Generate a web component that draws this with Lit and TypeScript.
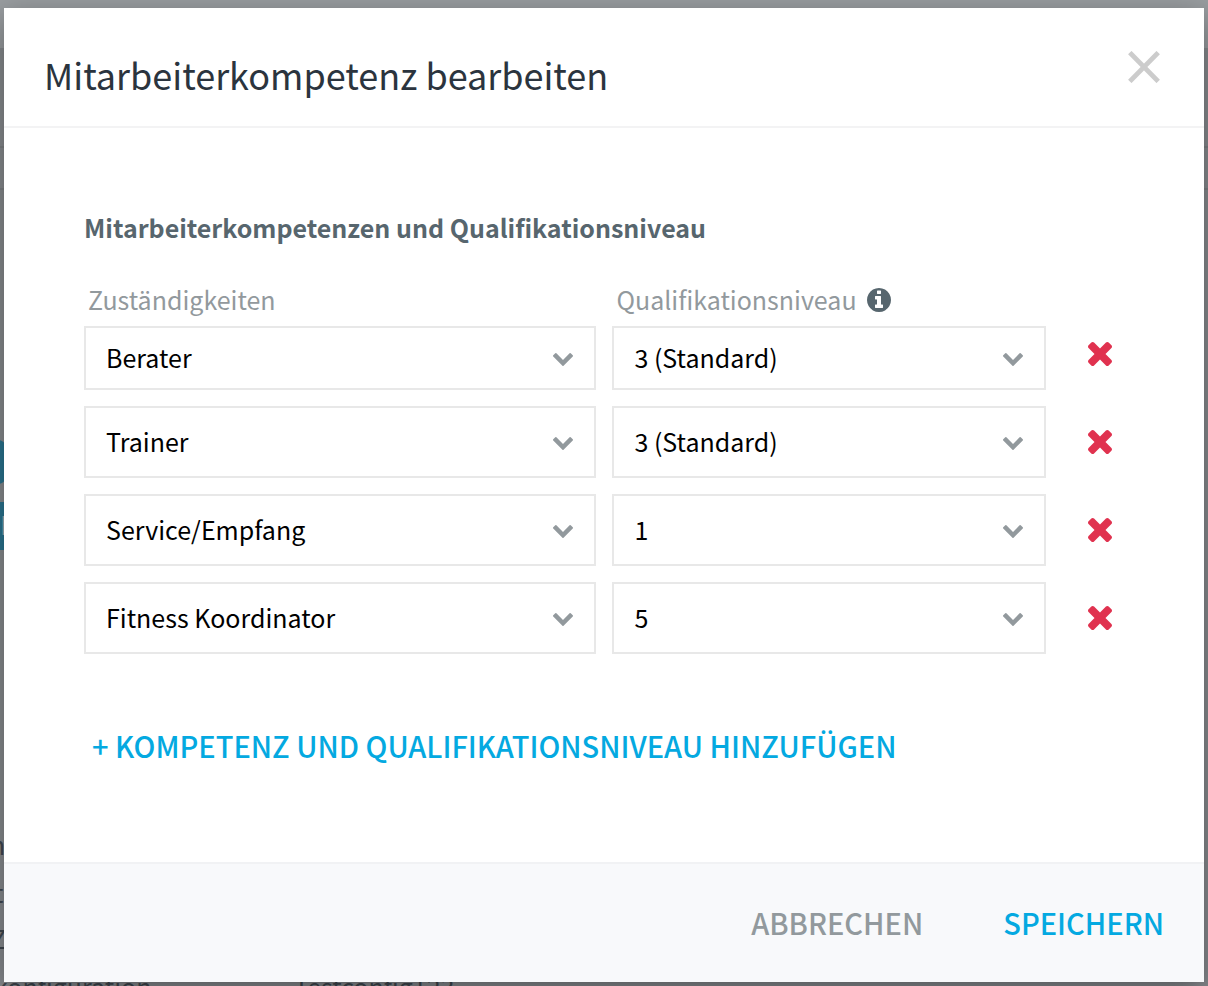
import { LitElement, html, css, svg } from "lit";
import { customElement, state } from "lit/decorators.js";

interface Entry {
  role: string;
  level: string;
}

const ROLES = ["Berater", "Trainer", "Service/Empfang", "Fitness Koordinator"];
const LEVELS = ["1", "2", "3 (Standard)", "4", "5"];

const closeIcon = html`<svg class="close-icon" viewBox="0 0 32 32" aria-hidden="true">
  ${svg`<path d="M1.8 1.6 L30.2 30.4 M30.2 1.6 L1.8 30.4" fill="none" stroke="currentColor" stroke-width="4.8" />`}
</svg>`;

const infoIcon = html`<svg class="info-icon" viewBox="128 128 1536 1536" role="img" aria-label="Info">
  ${svg`<path fill="currentColor" d="M1152 1376v-160q0-14-9-23t-23-9h-96v-512q0-14-9-23t-23-9h-320q-14 0-23 9t-9 23v160q0 14 9 23t23 9h96v320h-96q-14 0-23 9t-9 23v160q0 14 9 23t23 9h448q14 0 23-9t9-23zm-128-896v-160q0-14-9-23t-23-9h-192q-14 0-23 9t-9 23v160q0 14 9 23t23 9h192q14 0 23-9t9-23zm640 416q0 209-103 385.5t-279.5 279.5-385.5 103-385.5-103-279.5-279.5-103-385.5 103-385.5 279.5-279.5 385.5-103 385.5 103 279.5 279.5 103 385.5z" />`}
</svg>`;

const chevronIcon = html`<svg class="chevron" viewBox="90 533 1612 1035" aria-hidden="true">
  ${svg`<path fill="currentColor" d="M1683 808l-742 741q-19 19-45 19t-45-19l-742-741q-19-19-19-45.5t19-45.5l166-165q19-19 45-19t45 19l531 531 531-531q19-19 45-19t45 19l166 165q19 19 19 45.5t-19 45.5z" />`}
</svg>`;

const removeIcon = html`<svg class="remove-icon" viewBox="302 366 1188 1188" aria-hidden="true">
  ${svg`<path fill="currentColor" d="M1490 1322q0 40-28 68l-136 136q-28 28-68 28t-68-28l-294-294-294 294q-28 28-68 28t-68-28l-136-136q-28-28-28-68t28-68l294-294-294-294q-28-28-28-68t28-68l136-136q28-28 68-28t68 28l294 294 294-294q28-28 68-28t68 28l136 136q28 28 28 68t-28 68l-294 294 294 294q28 28 28 68z" />`}
</svg>`;

/* The dimmed page that shows round the edges of the dialog. */
@customElement("page-behind")
export class PageBehind extends LitElement {
  static styles = css`
    :host {
      position: absolute;
      inset: 0;
      overflow: hidden;
      background: #888b8f;
      color: #3f474f;
      font: 400 25px/36px "Noto Sans CJK SC", "Noto Sans", sans-serif;
    }
    .topbar {
      position: absolute;
      inset: 0 0 auto;
      height: 48px;
      background: #999da0;
    }
    .band {
      position: absolute;
      inset: 146px 0 auto;
      height: 44px;
      box-sizing: border-box;
      border: solid #7d8184;
      border-width: 2px 0;
    }
    .knob,
    .tab {
      position: absolute;
      background: #2a7590;
    }
    .knob {
      left: -40px;
      top: 440px;
      width: 46px;
      height: 44px;
      border-radius: 8px;
    }
    .tab {
      left: 0;
      top: 502px;
      width: 40px;
      height: 48px;
      line-height: 44px;
      color: #a0adb3;
    }
    .word {
      position: absolute;
      white-space: nowrap;
    }
    .w1 { left: -10px; top: 826px; }
    .w2 { left: -6px; top: 874px; }
    .w3 { left: -9px; top: 920px; }
    .w4 { left: -6px; top: 968px; }
    .w5 { left: 294px; top: 968px; }
  `;

  render() {
    return html`
      <div class="topbar"></div>
      <div class="band"></div>
      <div class="knob"></div>
      <div class="tab">F</div>
      <span class="word w1">n</span>
      <span class="word w2">t</span>
      <span class="word w3">Z</span>
      <span class="word w4">konfiguration</span>
      <span class="word w5">Testconfig123</span>
    `;
  }
}

@customElement("app-root")
export class AppRoot extends LitElement {
  @state() private entries: Entry[] = [
    { role: "Berater", level: "3 (Standard)" },
    { role: "Trainer", level: "3 (Standard)" },
    { role: "Service/Empfang", level: "1" },
    { role: "Fitness Koordinator", level: "5" },
  ];

  static styles = css`
    :host {
      display: flex;
      position: relative;
      box-sizing: border-box;
      min-height: 100vh;
      padding: 8px 4px 4px;
      overflow: hidden;
      font: 400 25px/36px "Noto Sans CJK SC", "Noto Sans", sans-serif;
      color: #000;
    }
    *,
    *::before {
      box-sizing: border-box;
    }
    button {
      margin: 0;
      padding: 0;
      border: 0;
      background: none;
      font: inherit;
      color: inherit;
      cursor: pointer;
    }
    svg {
      display: block;
    }
    .dialog {
      position: relative;
      flex: 1;
      display: flex;
      flex-direction: column;
      min-width: 0;
      background: #fff;
      box-shadow: 0 10px 30px rgba(0, 0, 0, 0.38);
    }
    .head {
      display: flex;
      justify-content: space-between;
      align-items: flex-start;
      padding: 40px 44px 26px 40px;
      border-bottom: 2px solid #f3f3f4;
    }
    .title {
      margin: 0;
      font-size: 36px;
      line-height: 52px;
      font-weight: 400;
      color: #2b343e;
    }
    .close {
      padding-top: 3px;
      color: #ccc;
    }
    .close-icon {
      width: 32px;
      height: 32px;
    }
    .body {
      flex: 1;
      padding: 80px;
    }
    .subtitle {
      margin: 0 0 36px;
      font-size: 25px;
      line-height: 38px;
      font-weight: 700;
      color: #57666e;
    }
    .row {
      display: grid;
      grid-template-columns: minmax(0, 13fr) minmax(0, 11fr) 62px;
      column-gap: 16px;
      height: 72px;
      margin-bottom: 16px;
    }
    .row.labels {
      height: 36px;
      margin: 0;
      line-height: 34px;
      color: #92999d;
    }
    .labels > span {
      display: flex;
      align-items: flex-start;
      gap: 10px;
      padding-left: 4px;
    }
    .info-icon {
      width: 24px;
      height: 24px;
      margin-top: 6px;
      color: #57666e;
    }
    .field {
      display: grid;
      align-items: center;
    }
    .row.first .field {
      padding-top: 8px;
    }
    .field > * {
      grid-area: 1 / 1;
    }
    .select {
      appearance: none;
      width: 100%;
      height: 100%;
      margin: 0;
      padding: 0 60px 2px 20px;
      border: 2px solid #e8e8e8;
      border-radius: 0;
      background: #fff;
      color: #000;
      font: inherit;
    }
    .chevron {
      justify-self: end;
      width: 20px;
      height: 13px;
      margin: 3px 23px 0 0;
      color: #92999d;
      pointer-events: none;
    }
    .remove {
      display: grid;
      place-items: center end;
      padding: 0 12px 1px 0;
      color: #e0324f;
    }
    .remove-icon {
      width: 24px;
      height: 24px;
    }
    .add,
    .action {
      font-size: 29px;
      line-height: 38px;
      font-weight: 500;
      color: #04a9e1;
      text-transform: uppercase;
    }
    .add {
      margin: 56px 0 0 8px;
      text-align: left;
    }
    .foot {
      display: flex;
      justify-content: flex-end;
      gap: 80px;
      padding: 39px 40px 41px;
      border-top: 2px solid #f1f2f4;
      background: #f8f9fb;
    }
    .action.quiet {
      color: #92999d;
    }
  `;

  private remove(index: number) {
    this.entries = this.entries.filter((_, i) => i !== index);
  }

  private add() {
    this.entries = [...this.entries, { role: ROLES[0], level: LEVELS[2] }];
  }

  private renderSelect(label: string, options: string[], value: string) {
    return html`<div class="field">
      <select class="select" aria-label=${label}>
        ${options.map((o) => html`<option ?selected=${o === value}>${o}</option>`)}
      </select>
      ${chevronIcon}
    </div>`;
  }

  render() {
    return html`
      <page-behind aria-hidden="true"></page-behind>
      <div class="dialog" role="dialog" aria-labelledby="title">
        <header class="head">
          <h1 class="title" id="title">Mitarbeiterkompetenz bearbeiten</h1>
          <button class="close" aria-label="Schließen">${closeIcon}</button>
        </header>
        <main class="body">
          <h2 class="subtitle">Mitarbeiterkompetenzen und Qualifikationsniveau</h2>
          <div class="row labels">
            <span>Zuständigkeiten</span>
            <span>Qualifikationsniveau ${infoIcon}</span>
          </div>
          ${this.entries.map(
            (e, i) => html`<div class="row ${i === 0 ? "first" : ""}">
              ${this.renderSelect("Zuständigkeiten", ROLES, e.role)}
              ${this.renderSelect("Qualifikationsniveau", LEVELS, e.level)}
              <button class="remove" aria-label="Entfernen" @click=${() => this.remove(i)}>
                ${removeIcon}
              </button>
            </div>`
          )}
          <button class="add" @click=${this.add}>+ Kompetenz und Qualifikationsniveau hinzufügen</button>
        </main>
        <footer class="foot">
          <button class="action quiet">Abbrechen</button>
          <button class="action">Speichern</button>
        </footer>
      </div>
    `;
  }
}
